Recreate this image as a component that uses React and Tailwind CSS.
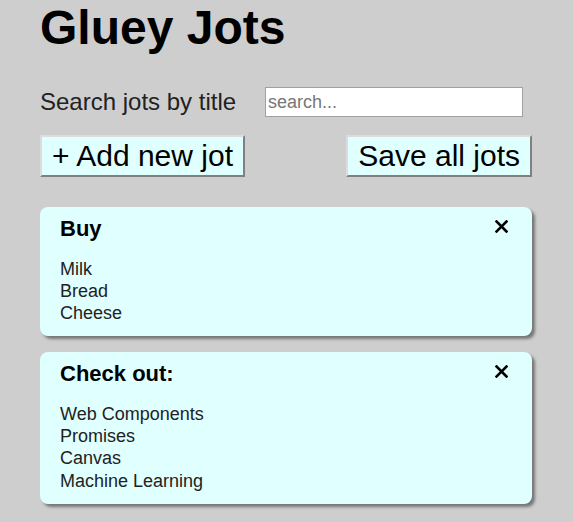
import React, { useState } from 'react';

const initialJots = [
    { id: 1, title: 'Buy', items: ['Milk', 'Bread', 'Cheese'] },
    { id: 2, title: 'Check out:', items: ['Web Components', 'Promises', 'Canvas', 'Machine Learning'] },
];

const CloseIcon = () => (
    <svg width="13" height="13" viewBox="0 0 13 13" className="block">
        <path d="M1.5 1.5 L11.5 11.5 M11.5 1.5 L1.5 11.5" stroke="#000" strokeWidth="2.6" strokeLinecap="square" />
    </svg>
);

const Jot = ({ jot, onRemove }) => (
    <div className="bg-[#e0ffff] rounded-[8px] shadow-[3px_3px_3px_#777] pl-5 pr-6 pt-[9px] pb-[12px]">
        <div className="flex justify-between items-start">
            <h2 className="text-[22px] font-bold text-black leading-[normal]">{jot.title}</h2>
            <button onClick={() => onRemove(jot.id)} className="cursor-pointer mt-[4px]">
                <CloseIcon />
            </button>
        </div>
        <div className="mt-[15.5px] text-[18px] leading-[22.3px] text-[#222]">
            {jot.items.map((item) => (
                <div key={item}>{item}</div>
            ))}
        </div>
    </div>
);

const App = () => {
    const [jots, setJots] = useState(initialJots);
    const [query, setQuery] = useState('');

    const shown = jots.filter((j) => j.title.toLowerCase().includes(query.toLowerCase()));

    return (
        <div className="min-h-screen bg-[#cecece] font-['Liberation_Sans',Arial,sans-serif]">
            <div className="w-[492px] ml-10 pb-5">
                <h1 className="text-[48px] font-bold leading-[normal] text-black">Gluey Jots</h1>

                <div className="flex items-center mt-[29px]">
                    <label className="text-[24px] text-[#222] w-[225px]">Search jots by title</label>
                    <input
                        value={query}
                        onChange={(e) => setQuery(e.target.value)}
                        placeholder="search..."
                        className="w-[258px] h-[30px] bg-white border border-[#a0a0a0] px-[2px] text-[18px] placeholder:text-[#767676] outline-none"
                    />
                </div>

                <div className="flex justify-between mt-[15px]">
                    <button className="bg-[#e0ffff] text-[30px] leading-[34px] px-[10px] py-[2px] border-2 border-t-[#dcdcdc] border-l-[#dcdcdc] border-b-[#808080] border-r-[#808080] text-black">
                        + Add new jot
                    </button>
                    <button className="bg-[#e0ffff] text-[30px] leading-[34px] px-[10px] py-[2px] border-2 border-t-[#dcdcdc] border-l-[#dcdcdc] border-b-[#808080] border-r-[#808080] text-black">
                        Save all jots
                    </button>
                </div>

                <div className="flex flex-col gap-4 mt-[30px]">
                    {shown.map((jot) => (
                        <Jot key={jot.id} jot={jot} onRemove={(id) => setJots(jots.filter((j) => j.id !== id))} />
                    ))}
                </div>
            </div>
        </div>
    );
};

export default App;
